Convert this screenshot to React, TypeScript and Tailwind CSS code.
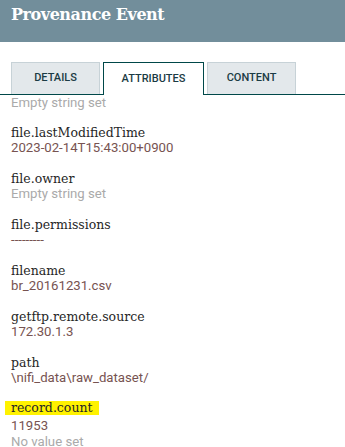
import React from 'react';

interface Attribute {
  name: string;
  value?: string;
  previous?: string;
  highlight?: boolean;
}

const attributes: Attribute[] = [
  { name: 'file.lastModifiedTime', value: '2023-02-14T15:43:00+0900' },
  { name: 'file.owner' },
  { name: 'file.permissions', value: '---------' },
  { name: 'filename', value: 'br_20161231.csv' },
  { name: 'getftp.remote.source', value: '172.30.1.3' },
  { name: 'path', value: '\\nifi_data\\raw_dataset/' },
  { name: 'record.count', value: '11953', previous: 'No value set', highlight: true },
];

const tabs = ['Details', 'Attributes', 'Content'];

export default function App() {
  return (
    <div className="w-[345px] h-[447px] overflow-hidden bg-white font-['Roboto',sans-serif]">
      <div className="h-[42px] bg-[#728e9b] px-[11px] pt-[4px]">
        <h1 className="font-['DejaVu_Serif',serif] font-bold text-[16px] leading-[22px] tracking-[-0.45px] text-white">
          Provenance Event
        </h1>
      </div>

      <div className="flex gap-[3px] pl-[11px] mt-[20px] border-b border-[#004849]">
        {tabs.map((tab) =>
          tab === 'Attributes' ? (
            <div
              key={tab}
              className="w-[101px] h-[33px] -mb-px bg-white border border-b-0 border-[#004849] flex items-center justify-center text-[11px] font-medium uppercase text-[#1b3b44]"
            >
              {tab}
            </div>
          ) : (
            <div
              key={tab}
              className="w-[89px] h-[32px] bg-[#e3e8eb] border border-b-0 border-[#c7d2d7] flex items-center justify-center text-[11px] font-medium uppercase text-[#1b3b44]"
            >
              {tab}
            </div>
          )
        )}
      </div>

      <div className="px-[11px] text-[13.2px]">
        {/* list is scrolled: only the tail of the previous entry shows */}
        <div className="leading-[16px] text-[#aaaaaa] mb-[13.5px]">Empty string set</div>
        {attributes.map((attr) => (
          <div key={attr.name} className="mb-[15px]">
            <div
              className={`font-['DejaVu_Serif',serif] text-[12.5px] text-[#262626] ${
                attr.highlight
                  ? 'bg-[#fff200] -mx-[6px] px-[6px] w-fit leading-[14px] mt-px mb-[3px]'
                  : 'leading-[15px]'
              }`}
            >
              {attr.name}
            </div>
            {attr.value ? (
              <div className="leading-[16px] text-[#775351]">{attr.value}</div>
            ) : (
              <div className="leading-[16px] text-[#aaaaaa]">Empty string set</div>
            )}
            {attr.previous && <div className="leading-[15px] text-[#aaaaaa]">{attr.previous}</div>}
          </div>
        ))}
      </div>
    </div>
  );
}
